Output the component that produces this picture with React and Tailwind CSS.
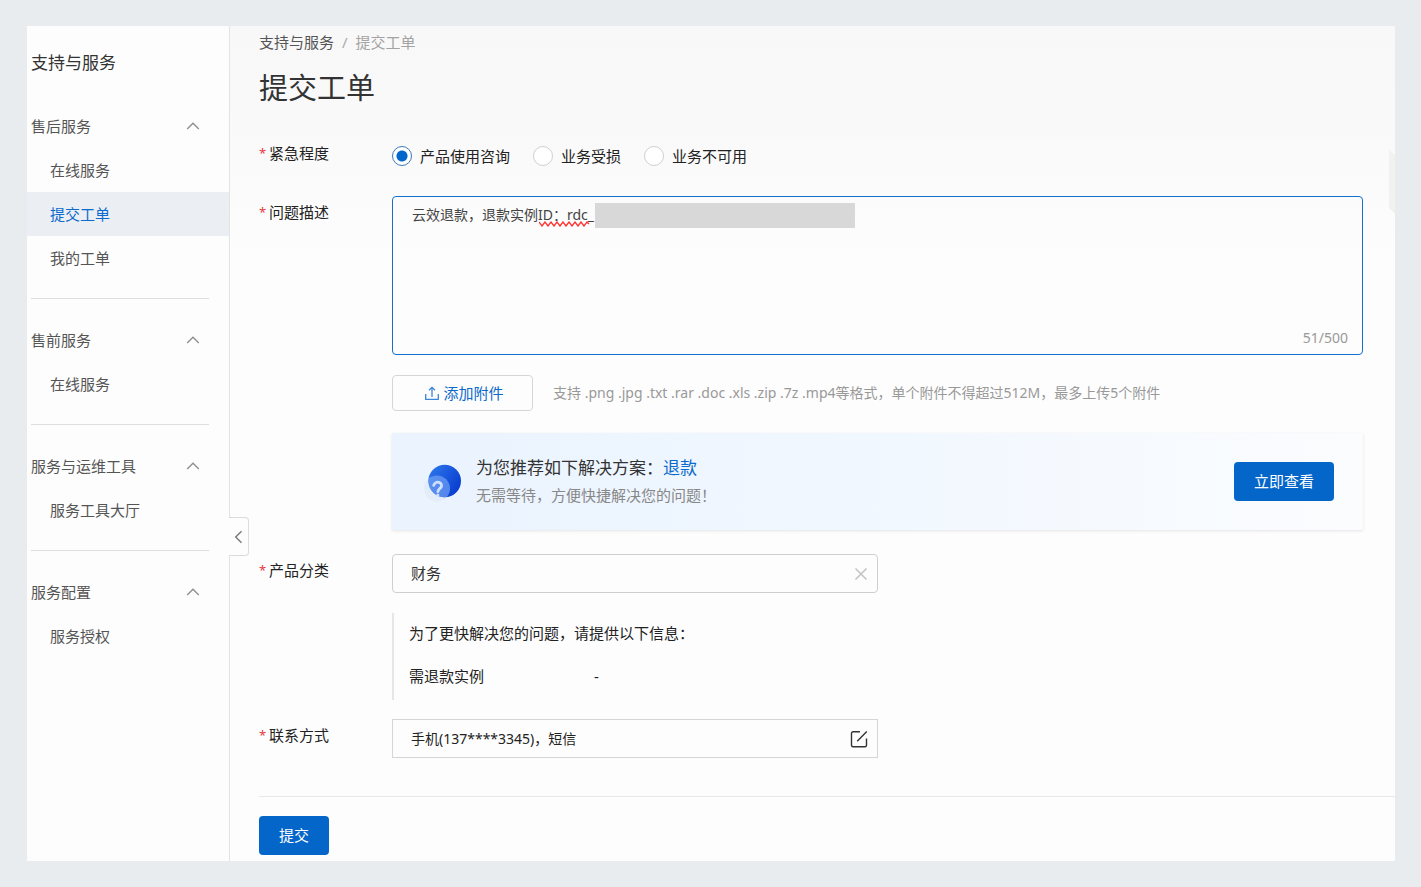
import React, { useState } from "react";

const groups = [
  { title: "售后服务", items: ["在线服务", "提交工单", "我的工单"] },
  { title: "售前服务", items: ["在线服务"] },
  { title: "服务与运维工具", items: ["服务工具大厅"] },
  { title: "服务配置", items: ["服务授权"] },
];

const levels = ["产品使用咨询", "业务受损", "业务不可用"];

function ChevronUp() {
  return (
    <svg width="14" height="9" viewBox="0 0 14 9" fill="none" stroke="#8f8f8f" strokeWidth="1.4" aria-hidden="true">
      <path d="M1.200 7 7 1.300 12.800 7" />
    </svg>
  );
}

function NavGroup({ title, items }) {
  return (
    <section className="mb-[19px] border-b border-[#dedede] pb-[18px] last:mb-0 last:border-b-0">
      <button type="button" className="flex h-11 w-full items-center justify-between pr-[9px] text-left text-[#555]">
        {title}
        <ChevronUp />
      </button>
      <ul>
        {items.map((item) => {
          const active = item === "提交工单";
          return (
            <li key={item} className={active ? "-ml-1 -mr-5 bg-[#ebeff4] pl-1" : ""}>
              <a href="#" className={"flex h-11 items-center pl-[19px] " + (active ? "text-[#0b6acb]" : "text-[#555]")}>
                {item}
              </a>
            </li>
          );
        })}
      </ul>
    </section>
  );
}

function Row({ label, htmlFor, className, children }) {
  return (
    <div className={"flex items-start " + className}>
      <label htmlFor={htmlFor} className="flex w-[133px] shrink-0 gap-1 pt-[5px] leading-[22px] text-[#222]">
        <span className="w-[6px] text-[13px] text-[#e5393f]">*</span>
        {label}
      </label>
      <div className="min-w-0 flex-1">{children}</div>
    </div>
  );
}

function HelpIcon() {
  return (
    <svg width="40" height="40" viewBox="0 0 40 40" aria-hidden="true">
      <defs>
        <linearGradient id="ball" x1="0" y1="0" x2="1" y2="0.6">
          <stop offset="0" stopColor="#2f7bee" />
          <stop offset="1" stopColor="#0a3fd0" />
        </linearGradient>
        <clipPath id="ballClip">
          <circle cx="21.7" cy="19" r="16.3" />
        </clipPath>
      </defs>
      <circle cx="14" cy="26.5" r="13" fill="#e1ebf7" opacity="0.8" />
      <circle cx="21.7" cy="19" r="16.3" fill="url(#ball)" />
      <circle cx="14" cy="26.5" r="13" fill="#78a6f7" opacity="0.65" clipPath="url(#ballClip)" />
      <path
        d="M10.7 23.4c.8-2.600 3-3.800 5.300-3 2.600.9 3.300 3.500 1.600 5.400-1.200 1.300-2.500 1.700-2.700 3.800"
        fill="none"
        stroke="#cfe0ff"
        strokeWidth="2.8"
        strokeLinecap="round"
      />
      <circle cx="14.8" cy="33" r="1.6" fill="#cfe0ff" />
    </svg>
  );
}

export default function App() {
  const [level, setLevel] = useState(levels[0]);
  const [desc, setDesc] = useState("云效退款，退款实例ID：rdc_");
  const [category, setCategory] = useState("财务");

  return (
    <div className="flex min-h-screen bg-[#e8ecef] pb-[26px] pl-[27px] pr-[26px] pt-[26px] font-['Noto_Sans','Noto_Sans_CJK_SC',sans-serif] text-[15px] leading-5">
      <div className="flex min-w-0 flex-1 bg-[#fdfdfd]">
        <aside className="relative z-10 w-[203px] shrink-0 border-r border-[#e3e3e3] pl-1 pr-5">
          <h2 className="pb-[29px] pt-[25px] text-[17px] leading-6 text-[#333]">支持与服务</h2>
          <nav>
            {groups.map((g) => (
              <NavGroup key={g.title} {...g} />
            ))}
          </nav>
          <button
            type="button"
            aria-label="收起"
            className="absolute -right-5 top-[491px] flex h-[39px] w-5 items-center justify-center rounded-r-sm border border-l-0 border-[#dcdcdc] bg-[#fdfdfd]"
          >
            <svg width="9" height="14" viewBox="0 0 9 14" fill="none" stroke="#777" strokeWidth="1.4" aria-hidden="true">
              <path d="M7.500 1.200 1.700 7 7.500 12.800" />
            </svg>
          </button>
        </aside>

        <main className="relative min-w-0 flex-1 bg-[linear-gradient(180deg,#f8f8f8_0px,#fafafa_140px,#fdfdfd_230px)] pl-[29px]">
          <svg className="absolute right-0 top-[124px]" width="6" height="64" viewBox="0 0 6 64" aria-hidden="true">
            <path d="M0 0 6 5V64L0 58Z" fill="#f1f1f0" />
          </svg>
          <nav className="flex gap-2 pt-[6px]">
            <a href="#" className="text-[#555]">支持与服务</a>
            <span className="text-[#aaa]">/</span>
            <span className="text-[#a3a3a3]">提交工单</span>
          </nav>
          <h1 className="mb-[29px] mt-4 text-[29px] leading-10 text-[#333]">提交工单</h1>

          <form id="ticket" className="pr-8" onSubmit={(e) => e.preventDefault()}>
            <Row label="紧急程度" htmlFor="level-0" className="">
              <div className="flex h-[38px] items-center gap-[23px]">
                {levels.map((l, i) => (
                  <label key={l} className="flex items-center gap-2 text-[#222]">
                    <input
                      id={"level-" + i}
                      type="radio"
                      name="level"
                      checked={level === l}
                      onChange={() => setLevel(l)}
                      className="h-5 w-5 appearance-none rounded-full border border-[#cfcfcf] bg-white checked:border-[#3a78b8] checked:bg-[radial-gradient(circle,#0366cb_0_5px,#fff_6px)]"
                    />
                    {l}
                  </label>
                ))}
              </div>
            </Row>

            <Row label="问题描述" htmlFor="desc" className="mt-[21px]">
              <div className="relative">
                <textarea
                  id="desc"
                  value={desc}
                  onChange={(e) => setDesc(e.target.value)}
                  spellCheck={false}
                  className="block h-[159px] w-full resize-none rounded-sm border border-[#1470cf] bg-transparent px-[19px] py-[7px] text-[14px] leading-[22px] text-[#444] outline-none"
                />
                <svg className="absolute left-[147px] top-[25px]" width="56" height="6" viewBox="0 0 56 6" fill="none" stroke="#f33" strokeWidth="1.3" aria-hidden="true">
                  <path d="M0 1 3 5 6 1 9 5 12 1 15 5 18 1 21 5 24 1 27 5 30 1 33 5 36 1 39 5 42 1 45 5 48 1 50 3" />
                </svg>
                <span className="absolute left-[203px] top-[7px] h-[25px] w-[260px] bg-[#d8d8d8]" />
                <span className="absolute bottom-[7px] right-[15px] text-[14px] text-[#999]">51/500</span>
              </div>

              <div className="mt-5 flex items-center gap-5">
                <button type="button" className="flex h-9 w-[141px] shrink-0 items-center justify-center gap-1 rounded-sm border border-[#d6d6d6] pb-px pl-1 text-[#0b6acb]">
                  <svg width="14" height="14" viewBox="0 0 14 14" fill="none" stroke="#3b86d8" strokeWidth="1.3" aria-hidden="true">
                    <path d="M.7 8v5.300h12.600V8M7 11V1.500M4 4.300 7 1.300l3 3" />
                  </svg>
                  添加附件
                </button>
                <p className="text-[14px] text-[#999]">
                  支持 .png .jpg .txt .rar .doc .xls .zip .7z .mp4等格式，单个附件不得超过512M，最多上传5个附件
                </p>
              </div>

              <div className="mt-[22px] flex h-[97px] items-center bg-[linear-gradient(90deg,#eaf3fe_0%,#f0f7ff_45%,#fbfcfe_100%)] pl-[31px] pr-[29px] shadow-[0_1px_3px_rgba(0,0,0,0.1)]">
                <HelpIcon />
                <div className="ml-[13px] flex-1 pb-[2px]">
                  <p className="text-[17px] leading-7 text-[#333]">
                    为您推荐如下解决方案：<a href="#" className="text-[#0b6acb]">退款</a>
                  </p>
                  <p className="leading-[26px] text-[#888]">无需等待，方便快捷解决您的问题！</p>
                </div>
                <button type="button" className="h-[39px] w-[100px] rounded-sm bg-[#0566ca] pb-px text-white">立即查看</button>
              </div>
            </Row>

            <Row label="产品分类" htmlFor="category" className="mt-6">
              <div className="flex h-[39px] w-[486px] items-center rounded-sm border border-[#cfcfcf] pl-[18px] pr-[9px]">
                <input
                  id="category"
                  value={category}
                  onChange={(e) => setCategory(e.target.value)}
                  className="min-w-0 flex-1 bg-transparent pb-px text-[#333] outline-none"
                />
                <button type="button" aria-label="清除" onClick={() => setCategory("")}>
                  <svg width="14" height="14" viewBox="0 0 14 14" stroke="#c4c4c4" strokeWidth="1.6" aria-hidden="true">
                    <path d="M1.500 1.500 12.500 12.500M12.500 1.500 1.500 12.500" />
                  </svg>
                </button>
              </div>
              <div className="mt-5 flex h-[87px] w-[486px] flex-col justify-between border-l-2 border-[#e6e6e6] pb-[14px] pl-[15px] pt-[10px] text-[#222]">
                <p>为了更快解决您的问题，请提供以下信息：</p>
                <dl className="flex">
                  <dt className="w-[185px]">需退款实例</dt>
                  <dd>-</dd>
                </dl>
              </div>
            </Row>

            <Row label="联系方式" htmlFor="contact" className="mt-[19px]">
              <div className="flex h-[39px] w-[486px] items-center border border-[#d6d6d6] pl-[18px] pr-[9px]">
                <input
                  id="contact"
                  readOnly
                  value="手机(137****3345)，短信"
                  className="min-w-0 flex-1 bg-transparent text-[14px] text-[#222] outline-none"
                />
                <button type="button" aria-label="编辑">
                  <svg width="18" height="18" viewBox="0 0 18 18" fill="none" stroke="#333" strokeWidth="1.4" aria-hidden="true">
                    <path d="M10 1.700H3A1.500 1.500 0 0 0 1.500 3.200v12A1.500 1.500 0 0 0 3 16.700h12a1.500 1.500 0 0 0 1.500-1.500V8.500M7.200 11.200 16.800 1.500" />
                  </svg>
                </button>
              </div>
            </Row>
          </form>

          <div className="mt-[38px] border-t border-[#e8e8e8] pb-[6px] pt-[19px]">
            <button type="submit" form="ticket" className="block h-[39px] w-[70px] rounded-sm bg-[#0566ca] pb-px text-white">提交</button>
          </div>
        </main>
      </div>
    </div>
  );
}
